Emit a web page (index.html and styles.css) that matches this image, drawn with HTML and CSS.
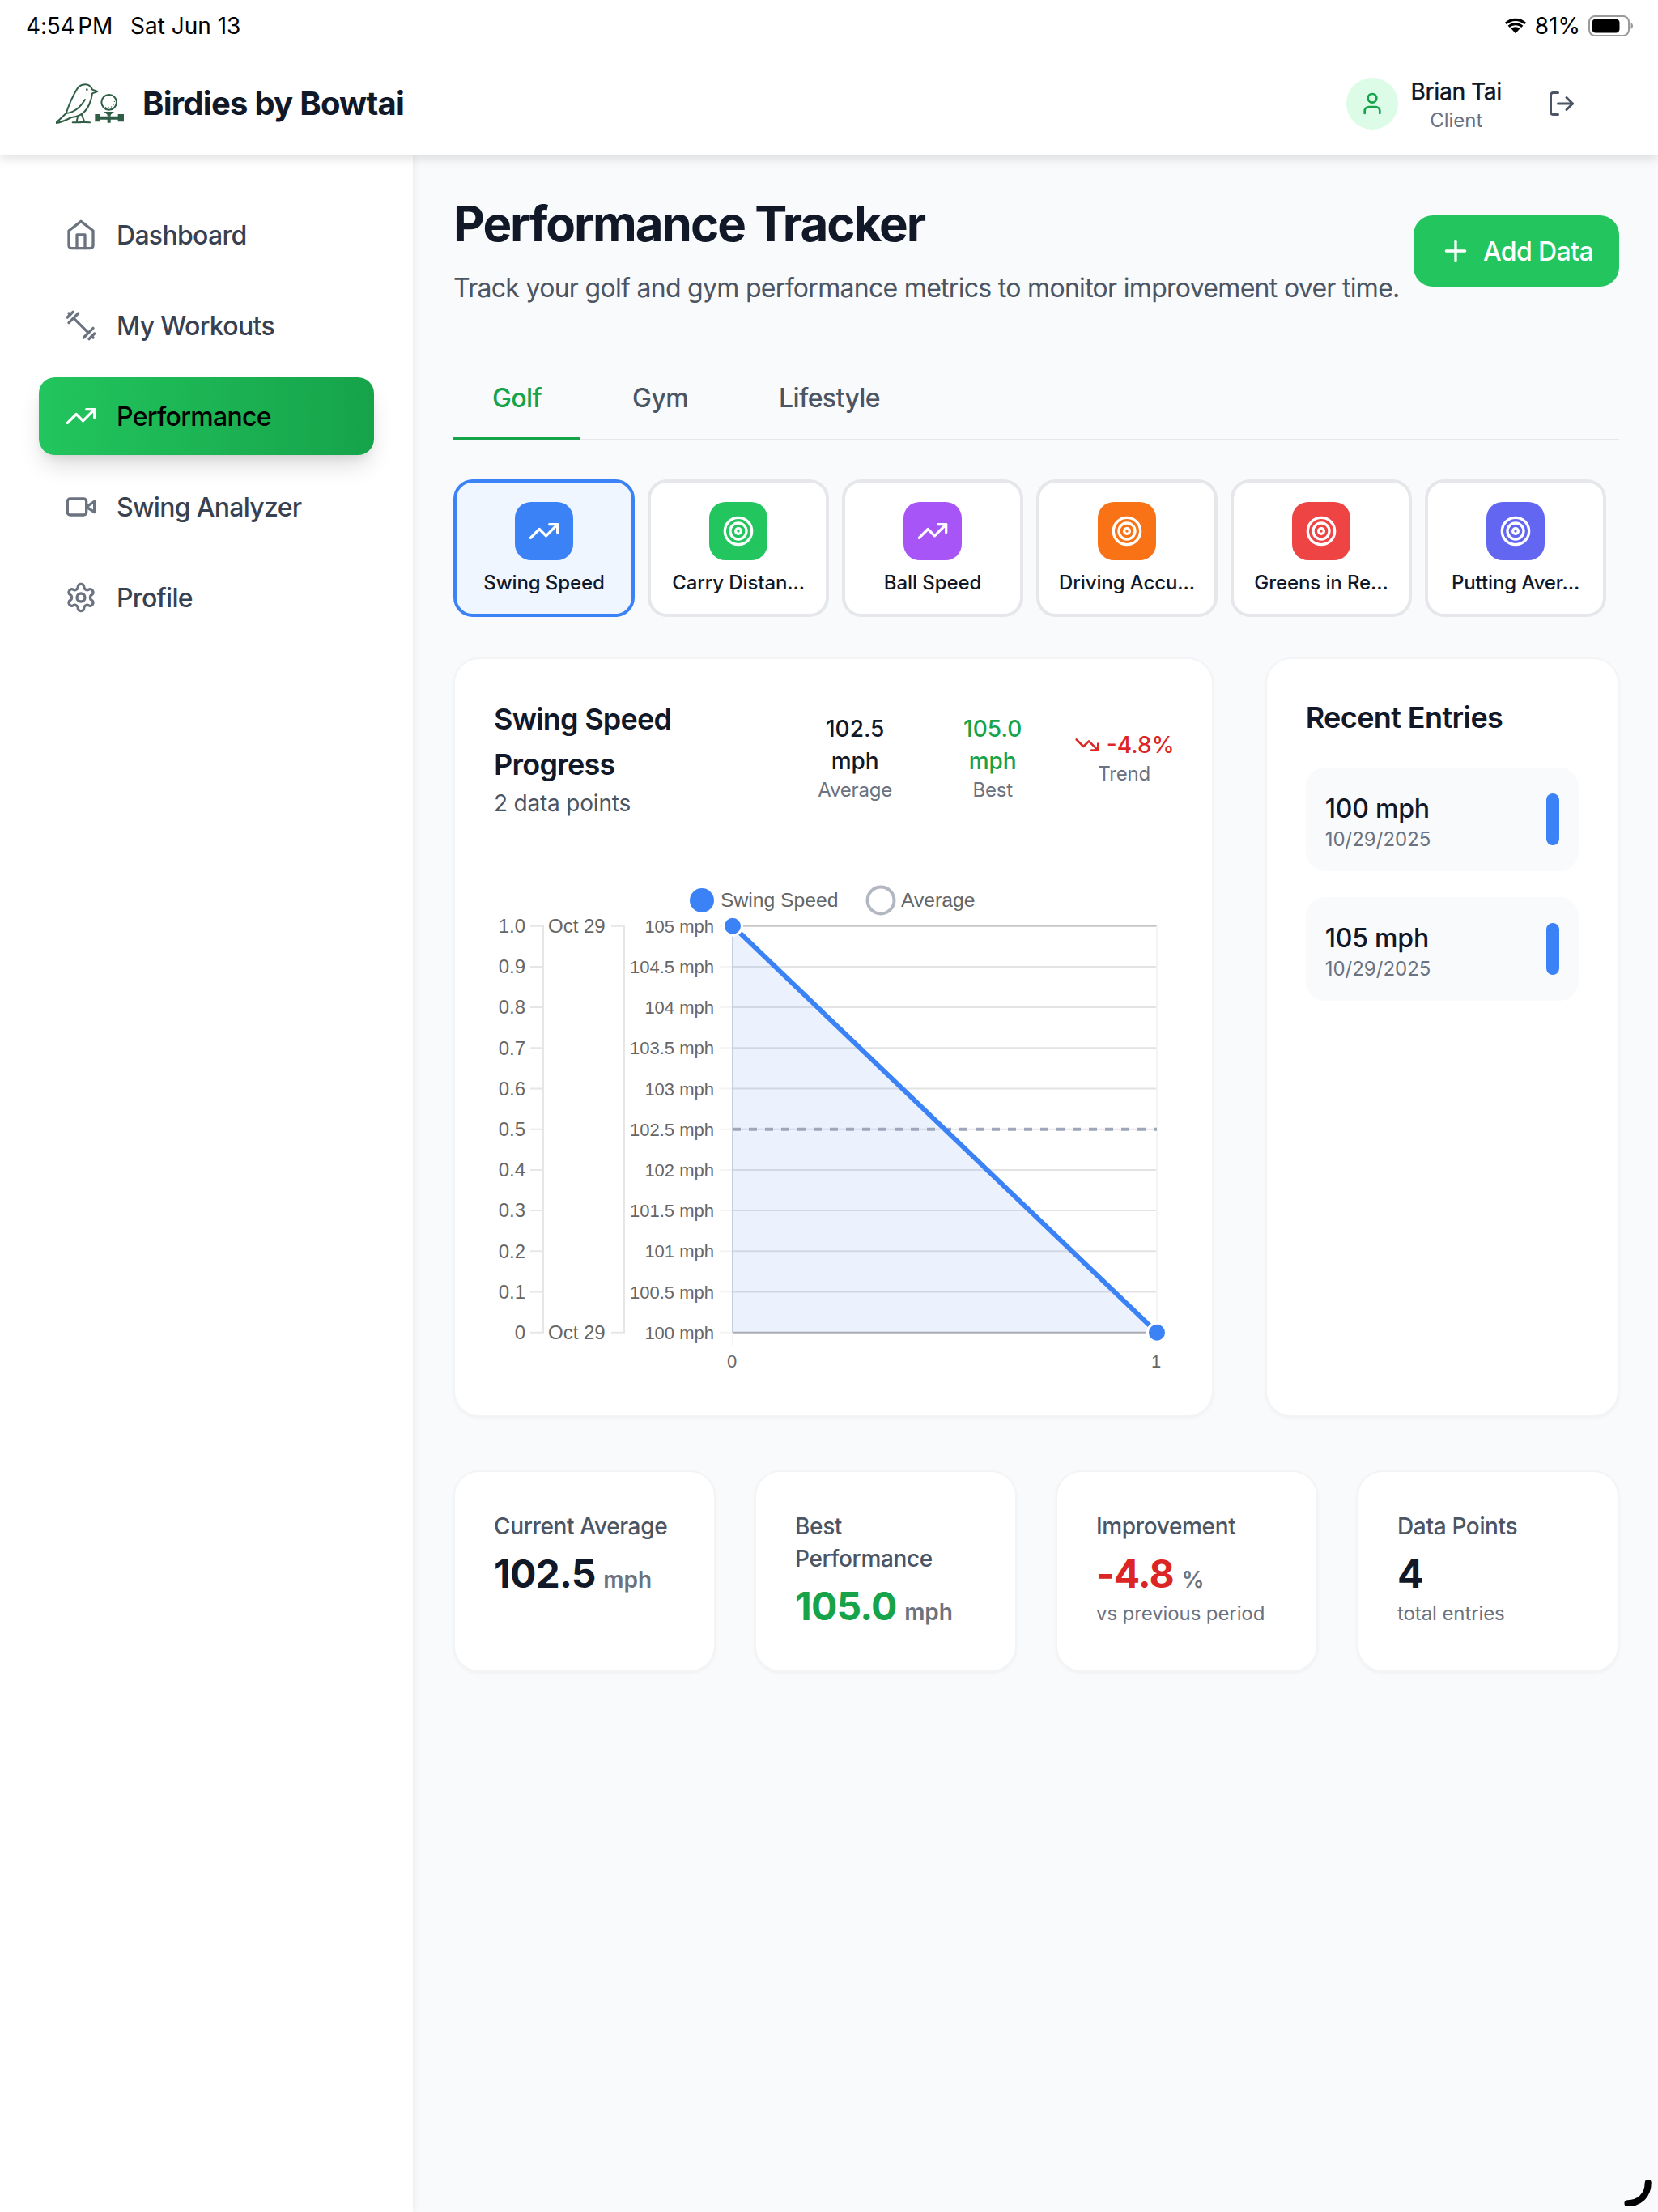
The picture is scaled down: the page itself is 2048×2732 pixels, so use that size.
FILE: index.html
```html
<!DOCTYPE html>
<html lang="en">
<head>
<meta charset="utf-8">
<title>Performance Tracker</title>
<link rel="stylesheet" href="styles.css">
</head>
<body>
<div class="app">
  <header class="topbar">
    <div class="status">
      <div class="status-left"><span class="clock">4:54<span class="thin"> </span>PM</span><span class="date">Sat Jun 13</span></div>
      <div class="status-right">
        <svg class="wifi" viewBox="0 0 30 20"><path d="M15 4c4.300 0 8.100 1.700 11 4.300l2.200-2.400C24.700 2.700 20 .8 15 .8S5.300 2.700 1.800 5.900L4 8.300C6.900 5.700 10.700 4 15 4z"/><path d="M15 9.300c2.800 0 5.300 1 7.200 2.800l2.200-2.400C21.900 7.400 18.600 6 15 6S8.100 7.400 5.600 9.700l2.200 2.400c1.900-1.800 4.400-2.800 7.200-2.800z"/><path d="M15 11.300c-2.100 0-3.900.8-5.300 2.100L15 19.200l5.300-5.800c-1.400-1.300-3.200-2.100-5.300-2.100z"/></svg>
        <span class="pct">81%</span>
        <svg class="battery" viewBox="0 0 56 26"><rect x="1" y="1" width="49" height="24" rx="7" class="bat-shell"/><rect x="4.500" y="4.500" width="34" height="17" rx="4.500" class="bat-fill"/><path d="M52.500 9v8c1.500-.6 2.500-2.200 2.500-4s-1-3.400-2.500-4z" class="bat-nub"/></svg>
      </div>
    </div>
    <div class="brandbar">
      <div class="brand">
        <svg class="logo" viewBox="60 70 255 150" fill="none">
          <g class="logo-line">
            <path d="M60 217 L98 181 C108 150 122 118 138 92 C146 76 170 68 184 78 C191 84 194 90 195 93 L214 100 L195 107 C192 132 180 165 160 180 C148 190 132 194 118 196 C100 205 80 215 60 217 Z"/>
            <path d="M98 181 C125 178 150 160 168 130"/>
            <path d="M141 192 L137 214 M156 186 L166 213"/>
            <path d="M122 215 H151 M150 213 L186 215"/>
            <circle cx="257" cy="140" r="28"/>
          </g>
          <circle cx="175" cy="93" r="4" class="logo-solid"/>
          <path d="M238 175 H276 L263 186 V192 H251 V186 Z" class="logo-solid"/>
          <path d="M205 184 H222 V192 H251 V192 H263 H290 V184 H312 V212 H290 V204 H263 V216 H251 V204 H222 V212 H205 Z" class="logo-solid"/>
          <circle cx="245" cy="158" r="2" class="logo-solid"/><circle cx="256" cy="160" r="2" class="logo-solid"/><circle cx="266" cy="157" r="2" class="logo-solid"/><circle cx="274" cy="148" r="2" class="logo-solid"/><circle cx="277" cy="137" r="2" class="logo-solid"/>
        </svg>
        <span class="brand-name">Birdies by Bowtai</span>
      </div>
      <div class="account">
        <span class="avatar"><svg class="ic ic-user" viewBox="0 0 24 24"><path d="M19 21v-2a4 4 0 0 0-4-4H9a4 4 0 0 0-4 4v2"/><circle cx="12" cy="7" r="4"/></svg></span>
        <div class="who"><div class="who-name">Brian Tai</div><div class="who-role">Client</div></div>
        <svg class="ic ic-logout" viewBox="0 0 24 24"><path d="M9 21H5a2 2 0 0 1-2-2V5a2 2 0 0 1 2-2h4"/><polyline points="16 17 21 12 16 7"/><line x1="21" x2="9" y1="12" y2="12"/></svg>
      </div>
    </div>
  </header>

  <div class="body">
    <nav class="sidebar">
      <a class="nav-item"><svg class="ic nav-ic" viewBox="0 0 24 24"><path d="m3 9 9-7 9 7v11a2 2 0 0 1-2 2H5a2 2 0 0 1-2-2z"/><polyline points="9 22 9 12 15 12 15 22"/></svg><span>Dashboard</span></a>
      <a class="nav-item"><svg class="ic nav-ic" viewBox="0 0 24 24"><path d="m6.500 6.500 11 11"/><path d="m21 21-1-1"/><path d="m3 3 1 1"/><path d="m18 22 4-4"/><path d="m2 6 4-4"/><path d="m3 10 7-7"/><path d="m14 21 7-7"/></svg><span>My Workouts</span></a>
      <a class="nav-item nav-active"><svg class="ic nav-ic" viewBox="0 0 24 24"><polyline points="22 7 13.500 15.500 8.500 10.500 2 17"/><polyline points="16 7 22 7 22 13"/></svg><span>Performance</span></a>
      <a class="nav-item"><svg class="ic nav-ic" viewBox="0 0 24 24"><path d="m22 8-6 4 6 4V8Z"/><rect width="14" height="12" x="2" y="6" rx="2" ry="2"/></svg><span>Swing Analyzer</span></a>
      <a class="nav-item"><svg class="ic nav-ic" viewBox="0 0 24 24"><path d="M12.220 2h-.44a2 2 0 0 0-2 2v.18a2 2 0 0 1-1 1.730l-.43.25a2 2 0 0 1-2 0l-.15-.08a2 2 0 0 0-2.730.73l-.22.38a2 2 0 0 0 .73 2.730l.15.1a2 2 0 0 1 1 1.720v.51a2 2 0 0 1-1 1.740l-.15.09a2 2 0 0 0-.73 2.730l.22.38a2 2 0 0 0 2.730.73l.15-.08a2 2 0 0 1 2 0l.43.25a2 2 0 0 1 1 1.730V20a2 2 0 0 0 2 2h.44a2 2 0 0 0 2-2v-.18a2 2 0 0 1 1-1.730l.43-.25a2 2 0 0 1 2 0l.15.08a2 2 0 0 0 2.730-.73l.22-.39a2 2 0 0 0-.73-2.730l-.15-.08a2 2 0 0 1-1-1.740v-.5a2 2 0 0 1 1-1.740l.15-.09a2 2 0 0 0 .73-2.730l-.22-.38a2 2 0 0 0-2.730-.73l-.15.08a2 2 0 0 1-2 0l-.43-.25a2 2 0 0 1-1-1.730V4a2 2 0 0 0-2-2z"/><circle cx="12" cy="12" r="3"/></svg><span>Profile</span></a>
    </nav>

    <main class="main">
      <div class="page-head">
        <div>
          <h1 class="page-title">Performance Tracker</h1>
          <p class="page-sub">Track your golf and gym performance metrics to monitor improvement over time.</p>
        </div>
        <button class="add-btn"><svg class="ic ic-plus" viewBox="0 0 24 24"><path d="M5 12h14"/><path d="M12 5v14"/></svg>Add Data</button>
      </div>

      <div class="tabs">
        <span class="tab tab-on">Golf</span>
        <span class="tab">Gym</span>
        <span class="tab">Lifestyle</span>
      </div>

      <div class="metrics">
        <div class="metric metric-on"><span class="tile tile-blue"><svg class="ic ic-tile" viewBox="0 0 24 24"><polyline points="22 7 13.500 15.500 8.500 10.500 2 17"/><polyline points="16 7 22 7 22 13"/></svg></span><span class="metric-label">Swing Speed</span></div>
        <div class="metric"><span class="tile tile-green"><svg class="ic ic-tile" viewBox="0 0 24 24"><circle cx="12" cy="12" r="10"/><circle cx="12" cy="12" r="6"/><circle cx="12" cy="12" r="2"/></svg></span><span class="metric-label">Carry Distan...</span></div>
        <div class="metric"><span class="tile tile-purple"><svg class="ic ic-tile" viewBox="0 0 24 24"><polyline points="22 7 13.500 15.500 8.500 10.500 2 17"/><polyline points="16 7 22 7 22 13"/></svg></span><span class="metric-label">Ball Speed</span></div>
        <div class="metric"><span class="tile tile-orange"><svg class="ic ic-tile" viewBox="0 0 24 24"><circle cx="12" cy="12" r="10"/><circle cx="12" cy="12" r="6"/><circle cx="12" cy="12" r="2"/></svg></span><span class="metric-label">Driving Accu...</span></div>
        <div class="metric"><span class="tile tile-red"><svg class="ic ic-tile" viewBox="0 0 24 24"><circle cx="12" cy="12" r="10"/><circle cx="12" cy="12" r="6"/><circle cx="12" cy="12" r="2"/></svg></span><span class="metric-label">Greens in Re...</span></div>
        <div class="metric"><span class="tile tile-indigo"><svg class="ic ic-tile" viewBox="0 0 24 24"><circle cx="12" cy="12" r="10"/><circle cx="12" cy="12" r="6"/><circle cx="12" cy="12" r="2"/></svg></span><span class="metric-label">Putting Aver...</span></div>
      </div>

      <div class="panels">
        <section class="card chart-card">
          <div class="chart-head">
            <div class="chart-titles">
              <h2 class="chart-title">Swing Speed Progress</h2>
              <p class="chart-sub">2 data points</p>
            </div>
            <div class="chart-stats">
              <div class="cstat cstat-avg"><span class="cstat-val">102.5</span><span class="cstat-val">mph</span><span class="cstat-lab">Average</span></div>
              <div class="cstat cstat-best"><span class="cstat-val best">105.0</span><span class="cstat-val best">mph</span><span class="cstat-lab">Best</span></div>
              <div class="cstat cstat-trend"><span class="trend-row"><svg class="ic ic-trend" viewBox="0 0 24 24"><polyline points="22 17 13.500 8.500 8.500 13.500 2 7"/><polyline points="16 17 22 17 22 11"/></svg><span class="cstat-val down">-4.8%</span></span><span class="cstat-lab">Trend</span></div>
            </div>
          </div>
          <svg class="chart" viewBox="610 1090 839 610">
            <g class="grid">
              <line x1="905" x2="1429" y1="1143.700" y2="1143.700" class="grid-top"/>
              <line x1="905" x2="1429" y1="1193.900" y2="1193.900"/>
              <line x1="905" x2="1429" y1="1244.100" y2="1244.100"/>
              <line x1="905" x2="1429" y1="1294.300" y2="1294.300"/>
              <line x1="905" x2="1429" y1="1344.500" y2="1344.500"/>
              <line x1="905" x2="1429" y1="1394.700" y2="1394.700"/>
              <line x1="905" x2="1429" y1="1444.900" y2="1444.900"/>
              <line x1="905" x2="1429" y1="1495.100" y2="1495.100"/>
              <line x1="905" x2="1429" y1="1545.300" y2="1545.300"/>
              <line x1="905" x2="1429" y1="1595.500" y2="1595.500"/>
            </g>
            <line x1="1429" x2="1429" y1="1143.700" y2="1645.700" class="edge"/>
            <line x1="905" x2="905" y1="1143.700" y2="1662" class="edge"/>
            <g class="edge">
              <path d="M889 1143.700h16M889 1193.900h16M889 1244.100h16M889 1294.300h16M889 1344.500h16M889 1394.700h16M889 1444.900h16M889 1495.100h16M889 1545.300h16M889 1595.500h16M889 1645.700h16"/>
            </g>
            <g class="axis">
              <path d="M655 1143.700h16v502h-16M655 1193.900h16M655 1244.100h16M655 1294.300h16M655 1344.500h16M655 1394.700h16M655 1444.900h16M655 1495.100h16M655 1545.300h16M655 1595.500h16"/>
              <path d="M755 1143.700h16v502h-16"/>
            </g>
            <polygon points="905,1143.700 1429,1645.700 905,1645.700" class="area"/>
            <line x1="905" x2="905" y1="1143.700" y2="1645.700" class="yline"/>
            <line x1="905" x2="1429" y1="1645.700" y2="1645.700" class="xline"/>
            <line x1="905" x2="1429" y1="1394.700" y2="1394.700" class="avgline"/>
            <line x1="905" x2="1429" y1="1143.700" y2="1645.700" class="series"/>
            <circle cx="905" cy="1143.700" r="11.500" class="dot"/>
            <circle cx="1429" cy="1645.700" r="11.500" class="dot"/>

            <circle cx="867" cy="1112" r="15" class="leg-a"/>
            <text x="890" y="1120" class="tleg">Swing Speed</text>
            <circle cx="1088" cy="1112" r="16.500" class="leg-b"/>
            <text x="1113" y="1120" class="tleg">Average</text>

            <g class="t24 end">
              <text x="649" y="1152">1.0</text><text x="649" y="1202">0.9</text><text x="649" y="1252">0.8</text><text x="649" y="1303">0.7</text><text x="649" y="1353">0.6</text><text x="649" y="1403">0.5</text><text x="649" y="1453">0.4</text><text x="649" y="1503">0.3</text><text x="649" y="1554">0.2</text><text x="649" y="1604">0.1</text><text x="649" y="1654">0</text>
            </g>
            <text x="677" y="1152" class="t24">Oct 29</text>
            <text x="677" y="1654" class="t24">Oct 29</text>
            <g class="t22 end">
              <text x="882" y="1152">105 mph</text><text x="882" y="1202">104.5 mph</text><text x="882" y="1252">104 mph</text><text x="882" y="1302">103.5 mph</text><text x="882" y="1353">103 mph</text><text x="882" y="1403">102.5 mph</text><text x="882" y="1453">102 mph</text><text x="882" y="1503">101.5 mph</text><text x="882" y="1553">101 mph</text><text x="882" y="1604">100.5 mph</text><text x="882" y="1654">100 mph</text>
            </g>
            <g class="t22 mid">
              <text x="904" y="1689">0</text><text x="1428" y="1689">1</text>
            </g>
          </svg>
        </section>

        <aside class="card recent">
          <h2 class="recent-title">Recent Entries</h2>
          <div class="entries">
            <div class="entry"><div><div class="entry-val">100 mph</div><div class="entry-date">10/29/2025</div></div><span class="entry-bar"></span></div>
            <div class="entry"><div><div class="entry-val">105 mph</div><div class="entry-date">10/29/2025</div></div><span class="entry-bar"></span></div>
          </div>
        </aside>
      </div>

      <div class="summary">
        <div class="card sum">
          <div class="sum-label">Current Average</div>
          <div class="sum-value"><span class="num">102.5</span> <span class="unit">mph</span></div>
        </div>
        <div class="card sum">
          <div class="sum-label">Best Performance</div>
          <div class="sum-value"><span class="num best">105.0</span> <span class="unit">mph</span></div>
        </div>
        <div class="card sum">
          <div class="sum-label">Improvement</div>
          <div class="sum-value"><span class="num down">-4.8</span> <span class="unit">%</span></div>
          <div class="sum-note">vs previous period</div>
        </div>
        <div class="card sum">
          <div class="sum-label">Data Points</div>
          <div class="sum-value"><span class="num">4</span></div>
          <div class="sum-note">total entries</div>
        </div>
      </div>
    </main>
  </div>
  <svg class="spinner" viewBox="0 0 40 40"><path d="M5 37C21 37 33 26 33 9"/></svg>
</div>
</body>
</html>
```

FILE: styles.css
```css
* { box-sizing: border-box; }
html, body { margin: 0; padding: 0; }
body {
  width: 2048px;
  height: 2732px;
  overflow: hidden;
  font-family: Inter, "Liberation Sans", sans-serif;
  color: #111827;
  background: #f9fafb;
}
.app { position: relative; width: 2048px; height: 2732px; display: flex; flex-direction: column; }

.ic { fill: none; stroke: currentColor; stroke-width: 2; stroke-linecap: round; stroke-linejoin: round; flex: none; }

/* top */
.topbar { position: relative; z-index: 2; height: 192px; flex: none; background: #fff; box-shadow: 0 4px 12px rgba(0,0,0,.12); }
.status { height: 64px; display: flex; justify-content: space-between; align-items: center; padding: 0 30px 0 32px; color: #000; font-size: 28px; }
.status-left { display: flex; gap: 22px; }
.clock { letter-spacing: -.2px; }
.thin { font-size: 14px; }
.status-right { display: flex; align-items: center; }
.wifi { width: 30px; height: 20px; fill: #000; margin-right: 9px; }
.pct { margin-right: 10px; }
.battery { width: 56px; height: 26px; }
.bat-shell { fill: none; stroke: #9a9a9a; stroke-width: 2; }
.bat-fill { fill: #000; }
.bat-nub { fill: #9a9a9a; }

.brandbar { height: 128px; display: flex; justify-content: space-between; align-items: center; padding: 0 101px 0 69px; }
.brand { display: flex; align-items: center; gap: 22px; }
.logo { width: 85px; height: 50px; }
.logo-line { stroke: #2f5d46; stroke-width: 6; stroke-linejoin: round; stroke-linecap: round; }
.logo-solid { fill: #2f5d46; }
.brand-name { font-size: 40px; font-weight: 700; line-height: 56px; color: #111827; letter-spacing: -.75px; }
.account { display: flex; align-items: center; }
.avatar { width: 64px; height: 64px; border-radius: 50%; background: #dcfce7; display: flex; align-items: center; justify-content: center; margin-right: 16px; }
.ic-user { width: 32px; height: 32px; color: #16a34a; }
.who { text-align: center; margin-right: 56px; padding-top: 2px; }
.who-name { font-size: 28px; line-height: 40px; font-weight: 500; color: #111827; letter-spacing: -.4px; }
.who-role { font-size: 24px; line-height: 32px; color: #6b7280; }
.ic-logout { width: 36px; height: 36px; color: #4b5563; }

/* frame */
.body { flex: 1; display: flex; min-height: 0; }
.sidebar { width: 510px; flex: none; background: #fff; padding: 50px 48px 0; display: flex; flex-direction: column; gap: 16px; box-shadow: 2px 0 8px rgba(0,0,0,.06); position: relative; z-index: 1; }
.nav-item { height: 96px; display: flex; align-items: center; gap: 24px; padding: 0 32px; border-radius: 20px; font-size: 32px; font-weight: 500; color: #374151; letter-spacing: -.7px; }
.nav-ic { width: 40px; height: 40px; color: #6b7280; }
.nav-active { background: linear-gradient(90deg, #22c55e, #16a34a); color: #000; box-shadow: 0 16px 30px -6px rgba(0,0,0,.16), 0 6px 12px -4px rgba(0,0,0,.08); }
.nav-active .nav-ic { color: #fff; }

.main { flex: 1; padding: 48px 48px 48px 50px; min-width: 0; }
.page-head { display: flex; justify-content: space-between; align-items: center; }
.page-title { margin: 0 0 20px; font-size: 60px; line-height: 72px; font-weight: 700; color: #111827; letter-spacing: -2px; }
.page-sub { margin: 0; font-size: 32px; line-height: 48px; color: #4b5563; white-space: nowrap; letter-spacing: -.7px; }
.add-btn { width: 254px; height: 88px; flex: none; border: 0; border-radius: 24px; background: #22c55e; color: #fff; font: 500 32px Inter, sans-serif; letter-spacing: -.6px; display: flex; align-items: center; justify-content: center; gap: 14px; padding: 0; }
.ic-plus { width: 40px; height: 40px; }

.tabs { display: flex; gap: 16px; margin-top: 60px; border-bottom: 2px solid #e5e7eb; height: 104px; }
.tab { height: 104px; padding: 28px 48px 0; font-size: 32px; line-height: 48px; font-weight: 500; color: #4b5563; border-bottom: 4px solid transparent; letter-spacing: -.6px; }
.tab-on { color: #16a34a; border-bottom-color: #16a34a; }

.metrics { display: flex; gap: 16px; margin-top: 48px; }
.metric { width: 224px; height: 170px; border: 4px solid #e5e7eb; border-radius: 24px; background: #fff; padding: 24px 0 0; display: flex; flex-direction: column; align-items: center; }
.metric-on { border-color: #3b82f6; background: #eff6ff; }
.tile { width: 72px; height: 72px; border-radius: 20px; display: flex; align-items: center; justify-content: center; color: #fff; flex: none; }
.ic-tile { width: 40px; height: 40px; }
.tile-blue { background: #3b82f6; }
.tile-green { background: #22c55e; }
.tile-purple { background: #a855f7; }
.tile-orange { background: #f97316; }
.tile-red { background: #ef4444; }
.tile-indigo { background: #6366f1; }
.metric-label { margin-top: 12px; text-align: center; font-size: 24px; line-height: 32px; font-weight: 500; color: #111827; white-space: nowrap; letter-spacing: -.1px; }

.panels { display: grid; grid-template-columns: 938.67px 437.33px; column-gap: 64px; margin-top: 50px; }
.card { background: #fff; border: 2px solid #f3f4f6; border-radius: 32px; box-shadow: 0 2px 4px rgba(0,0,0,.04); }
.chart-card { padding: 46px 48px 48px; }
.chart-head { display: flex; justify-content: space-between; align-items: center; }
.chart-titles { width: 340px; }
.chart-title { margin: 0; font-size: 36px; line-height: 56px; font-weight: 600; color: #111827; letter-spacing: -.75px; }
.chart-sub { margin: 0; font-size: 28px; line-height: 40px; color: #4b5563; letter-spacing: -.2px; }
.chart-stats { display: flex; gap: 48px; align-items: center; }
.cstat { display: flex; flex-direction: column; align-items: center; }
.cstat-avg { width: 135px; }
.cstat-best { width: 109px; }
.cstat-trend { width: 120px; }
.cstat-val { font-size: 28px; line-height: 40px; font-weight: 500; color: #111827; }
.cstat-lab { font-size: 24px; line-height: 32px; color: #6b7280; letter-spacing: -.2px; }
.cstat-val.best { color: #16a34a; }
.cstat-val.down { color: #dc2626; }
.trend-row { display: flex; align-items: center; gap: 8px; }
.ic-trend { width: 32px; height: 32px; color: #dc2626; }

.chart { display: block; width: 839px; height: 610px; margin-top: 78px; }
.grid line { stroke: #e3e3e3; stroke-width: 2; }
.grid .grid-top { stroke: #c6c6c6; }
.edge { stroke: #f4f4f4; stroke-width: 2; fill: none; }
.axis path { stroke: #e6e6e6; stroke-width: 2; fill: none; }
.area { fill: rgba(59,130,246,.1); }
.yline { stroke: #c6cedd; stroke-width: 2; }
.xline { stroke: #a9acb3; stroke-width: 2; }
.avgline { stroke: #9ea6ba; stroke-width: 4; stroke-dasharray: 10 10; }
.series { stroke: #3b82f6; stroke-width: 6; }
.dot { fill: #3b82f6; stroke: #fff; stroke-width: 3; }
.leg-a { fill: #3b82f6; }
.leg-b { fill: #fff; stroke: #b3b7c2; stroke-width: 4; }
.t24 { font: 24px "Liberation Sans", Arial, sans-serif; fill: #666; }
.t22 { font: 22px "Liberation Sans", Arial, sans-serif; fill: #666; }
.tleg { font: 24.700px "Liberation Sans", Arial, sans-serif; fill: #666; }
.end { text-anchor: end; }
.mid { text-anchor: middle; }

.recent { padding: 48px; }
.recent-title { margin: 0 0 38px; font-size: 36px; line-height: 48px; font-weight: 600; color: #111827; letter-spacing: -.6px; }
.entries { display: flex; flex-direction: column; gap: 32px; }
.entry { display: flex; justify-content: space-between; align-items: center; padding: 24px; height: 128px; border-radius: 24px; background: #f9fafb; }
.entry-val { font-size: 32px; line-height: 48px; font-weight: 500; color: #111827; letter-spacing: -.2px; margin-top: 2px; }
.entry-date { font-size: 24px; line-height: 32px; color: #6b7280; margin-bottom: -2px; margin-top: -2px; }
.entry-bar { width: 16px; height: 64px; border-radius: 8px; background: #3b82f6; }

.summary { display: grid; grid-template-columns: repeat(4, 1fr); gap: 48px; margin-top: 66px; }
.sum { padding: 47px 48px 0; height: 249px; }
.sum-label { font-size: 28px; line-height: 40px; font-weight: 500; color: #4b5563; letter-spacing: -.35px; }
.sum-value { margin-top: 7px; line-height: 64px; height: 64px; white-space: nowrap; }
.num { font-size: 48px; font-weight: 700; color: #111827; letter-spacing: -.8px; }
.num.best { color: #16a34a; }
.num.down { color: #dc2626; }
.unit { font-size: 28px; font-weight: 600; color: #6b7280; margin-left: 5px; }
.sum-note { font-size: 24px; line-height: 32px; color: #6b7280; letter-spacing: -.1px; margin-top: 1px; }

.spinner { position: absolute; left: 2006px; top: 2688px; width: 36px; height: 36px; fill: none; stroke: #000; stroke-width: 9; stroke-linecap: round; }
```
